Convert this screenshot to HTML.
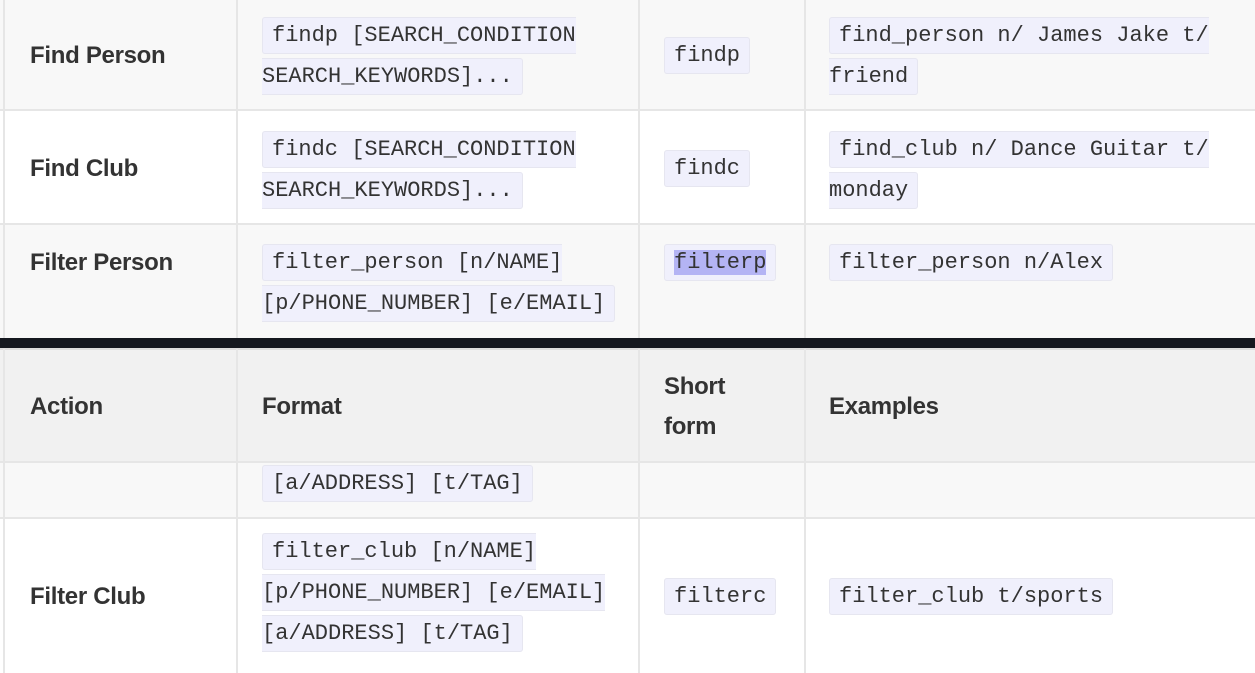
<!DOCTYPE html>
<html><head><meta charset="utf-8"><style>
html,body{margin:0;padding:0}
body{width:1255px;height:673px;position:relative;overflow:hidden;background:#fff;font-family:"Liberation Sans",sans-serif;color:#333}
.bg{position:absolute;left:0;width:1255px}
.vl{position:absolute;width:2px;background:#e6e6e6}
.hl{position:absolute;height:2px;background:#e6e6e6;left:0;width:1255px}
.c{position:absolute;line-height:40px;white-space:nowrap}
.b{font-weight:bold;font-size:24px;color:#333;letter-spacing:-0.3px}
code{font-family:"Liberation Mono",monospace;font-size:22px;background:#f0f0fc;border:1px solid #e6e6f0;border-radius:3px;padding:5px 9px;color:#333}
.hi{background:#b4b4f4}
</style></head><body>
<div class="bg" style="top:0;height:110px;background:#f8f8f8"></div>
<div class="bg" style="top:110px;height:114px;background:#fff"></div>
<div class="bg" style="top:224px;height:114px;background:#f8f8f8"></div>
<div class="bg" style="top:338px;height:11px;background:#15181f"></div>
<div class="bg" style="top:349px;height:113px;background:#f1f1f1"></div>
<div class="bg" style="top:462px;height:56px;background:#f8f8f8"></div>
<div class="bg" style="top:518px;height:155px;background:#fff"></div>

<div class="hl" style="top:109px"></div>
<div class="hl" style="top:223px"></div>
<div class="hl" style="top:461px"></div>
<div class="hl" style="top:517px"></div>
<div class="hl" style="top:348px;background:#ddd"></div>

<div class="vl" style="left:3px;top:0;height:338px"></div>
<div class="vl" style="left:236px;top:0;height:338px"></div>
<div class="vl" style="left:638px;top:0;height:338px"></div>
<div class="vl" style="left:804px;top:0;height:338px"></div>
<div class="vl" style="left:3px;top:349px;height:324px"></div>
<div class="vl" style="left:236px;top:349px;height:324px"></div>
<div class="vl" style="left:638px;top:349px;height:324px"></div>
<div class="vl" style="left:804px;top:349px;height:324px"></div>

<div class="c b" style="left:30px;top:36px">Find Person</div>
<div class="c" style="left:262px;top:16px"><code>findp [SEARCH_CONDITION<br>SEARCH_KEYWORDS]...</code></div>
<div class="c" style="left:664px;top:36px"><code>findp</code></div>
<div class="c" style="left:829px;top:16px"><code>find_person n/ James Jake t/<br>friend</code></div>

<div class="c b" style="left:30px;top:149px">Find Club</div>
<div class="c" style="left:262px;top:130px"><code>findc [SEARCH_CONDITION<br>SEARCH_KEYWORDS]...</code></div>
<div class="c" style="left:664px;top:149px"><code>findc</code></div>
<div class="c" style="left:829px;top:130px"><code>find_club n/ Dance Guitar t/<br>monday</code></div>

<div class="c b" style="left:30px;top:243px">Filter Person</div>
<div class="c" style="left:262px;top:243px"><code>filter_person [n/NAME]<br>[p/PHONE_NUMBER] [e/EMAIL]</code></div>
<div class="c" style="left:664px;top:243px"><code><span class="hi">filterp</span></code></div>
<div class="c" style="left:829px;top:243px"><code>filter_person n/Alex</code></div>

<div class="c b" style="left:30px;top:387px">Action</div>
<div class="c b" style="left:262px;top:387px">Format</div>
<div class="c b" style="left:664px;top:367px">Short<br>form</div>
<div class="c b" style="left:829px;top:387px">Examples</div>

<div class="c" style="left:262px;top:464px"><code>[a/ADDRESS] [t/TAG]</code></div>

<div class="c b" style="left:30px;top:577px">Filter Club</div>
<div class="c" style="left:262px;top:532px"><code>filter_club [n/NAME]<br>[p/PHONE_NUMBER] [e/EMAIL]<br>[a/ADDRESS] [t/TAG]</code></div>
<div class="c" style="left:664px;top:577px"><code>filterc</code></div>
<div class="c" style="left:829px;top:577px"><code>filter_club t/sports</code></div>
</body></html>
